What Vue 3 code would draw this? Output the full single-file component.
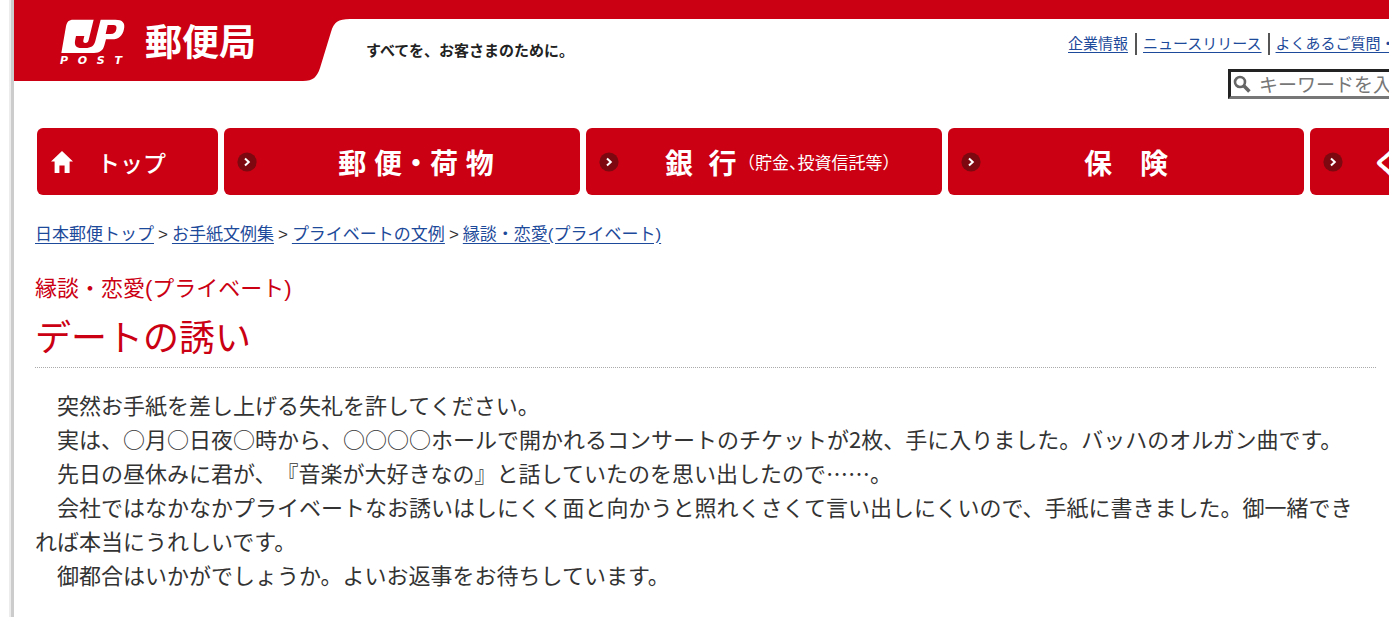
<script setup>
const utilityLinks = ['企業情報', 'ニュースリリース', 'よくあるご質問・お問い合わせ']

const services = [
  { name: '郵 便・荷 物', offset: true },
  { name: '銀  行', note: '（貯金、投資信託等）', offset: true },
  { name: '保　険' },
  { name: 'くらしの サービス' },
]

const crumbs = ['日本郵便トップ', 'お手紙文例集', 'プライベートの文例', '縁談・恋愛(プライベート)']

const letter = [
  '　突然お手紙を差し上げる失礼を許してください。',
  '　実は、○月○日夜○時から、○○○○ホールで開かれるコンサートのチケットが2枚、手に入りました。バッハのオルガン曲です。',
  '　先日の昼休みに君が、『音楽が大好きなの』と話していたのを思い出したので……。',
  '　会社ではなかなかプライベートなお誘いはしにくく面と向かうと照れくさくて言い出しにくいので、手紙に書きました。御一緒できれば本当にうれしいです。',
  '　御都合はいかがでしょうか。よいお返事をお待ちしています。',
]
</script>

<template>
  <div class="page">
    <header class="header">
      <div class="brand">
        <svg class="brand-tab" viewBox="0 0 336 81" aria-hidden="true">
          <path d="M0 0H336V19C324 19 320 22 317 32L306 68C303 77 299 81 289 81H0Z" fill="#cb0013" />
        </svg>
        <a class="brand-link" href="#">
          <span class="mark">
            <svg class="jp" viewBox="186 54 198 106" role="img" aria-label="JP">
              <path
                fill="#fff"
                fill-rule="evenodd"
                d="M226 58H352C374 58 382 68 378 86C374 107 362 117 342 117H324L320 132C316 150 306 158 288 158H190L204 78C207 64 212 58 226 58ZM329 74L323 101H338C348 101 353 97 355 87C357 78 354 74 346 74Z"
              />
              <path
                fill="#cb0013"
                d="M288 54H309L292 122C288 137 279 143 262 143H250C235 143 229 136 231 122L234 107H259L256 120C255 126 257 128 262 128C268 128 270 126 272 119Z"
              />
            </svg>
            <span class="post"><span>P</span><span>O</span><span>S</span><span>T</span></span>
          </span>
          <span class="brand-name">郵便局</span>
        </a>
      </div>
      <p class="slogan">すべてを、お客さまのために。</p>
      <div class="tools">
        <ul class="utility">
          <li v-for="link in utilityLinks" :key="link"><a href="#">{{ link }}</a></li>
        </ul>
        <label class="search">
          <svg viewBox="0 0 18 18" aria-hidden="true">
            <circle cx="7" cy="7" r="5" fill="none" stroke="#666" stroke-width="2.6" />
            <path d="M10.8 10.8L16.4 16.4" stroke="#666" stroke-width="3.6" />
          </svg>
          <input type="text" placeholder="キーワードを入力" aria-label="キーワードを入力" />
        </label>
      </div>
    </header>

    <nav class="services">
      <a class="service home" href="#">
        <svg class="house" viewBox="0 0 22 22" aria-hidden="true">
          <path d="M11 0L22 10.4H18.6V22H13.6V14.5H8.4V22H3.6V10.4H0Z" fill="#fff" />
        </svg>
        <span>トップ</span>
      </a>
      <a v-for="item in services" :key="item.name" class="service" href="#">
        <svg class="arrow" viewBox="0 0 20 20" aria-hidden="true">
          <circle cx="10" cy="10" r="9.6" fill="#7d0810" />
          <path d="M8 6.4L11.8 10L8 13.6" fill="none" stroke="#fff" stroke-width="2" />
        </svg>
        <span class="label" :class="{ offset: item.offset }">
          <span>{{ item.name }}</span>
          <small v-if="item.note">{{ item.note }}</small>
        </span>
      </a>
    </nav>

    <main class="content">
      <ol class="crumbs">
        <li v-for="crumb in crumbs" :key="crumb"><a href="#">{{ crumb }}</a></li>
      </ol>
      <p class="category">縁談・恋愛(プライベート)</p>
      <h1>デートの誘い</h1>
      <div class="letter">
        <p v-for="(line, i) in letter" :key="i">{{ line }}</p>
      </div>
    </main>
  </div>
</template>

<style>
body {
  margin: 0;
  background: #fff;
}
</style>

<style scoped>
.page {
  min-height: 100vh;
  box-sizing: border-box;
  margin-left: 11px;
  border-left: 3px solid #ccc;
  box-shadow: -2px 0 #ececec;
  overflow: hidden;
  color: #333;
  font-family: 'Liberation Sans', 'Noto Sans CJK JP', sans-serif;
}
p,
h1,
ul,
ol {
  margin: 0;
  padding: 0;
  font-weight: normal;
}
ul,
ol {
  display: flex;
  list-style: none;
  white-space: nowrap;
}
a {
  color: #1d4a9a;
  text-underline-offset: 3px;
}

.header {
  display: flex;
  align-items: flex-start;
  background: linear-gradient(#cb0013 19px, #fff 19px);
}
.brand {
  display: grid;
  flex: none;
}
.brand-tab,
.brand-link {
  grid-area: 1 / 1;
}
.brand-tab {
  width: 336px;
  height: 81px;
}
.brand-link {
  display: flex;
  gap: 19px;
  padding: 18px 0 0 46px;
  color: #fff;
  text-decoration: none;
}
.mark {
  display: flex;
  flex-direction: column;
  width: 66px;
}
.jp {
  width: 66px;
  height: 36px;
}
.post {
  display: flex;
  justify-content: space-between;
  width: 62px;
  font: italic bold 11px/14px 'DejaVu Sans', sans-serif;
}
.brand-name {
  font-size: 37px;
  font-weight: bold;
  line-height: 52px;
}
.slogan {
  padding: 40px 0 0 16px;
  color: #222;
  font-size: 15px;
  font-weight: bold;
  line-height: 22px;
  white-space: nowrap;
}
.tools {
  flex: none;
  width: 321px;
  margin-left: auto;
  padding-top: 33px;
  overflow: hidden;
}
.utility li {
  padding-right: 7px;
  font-size: 15px;
  line-height: 22px;
}
.utility li + li {
  padding: 0 6px;
  border-left: 2px solid #555;
}
.search {
  display: flex;
  align-items: center;
  box-sizing: border-box;
  width: 300px;
  height: 30px;
  margin: 14px 0 0 160px;
  padding-left: 2px;
  border: 3px solid;
  border-color: #222 #777 #777 #222;
}
.search svg {
  width: 18px;
  height: 18px;
}
.search input {
  flex: 1;
  min-width: 0;
  margin-left: 8px;
  padding: 0;
  border: 0;
  outline: 0;
  font: 19px/24px 'Noto Sans CJK JP', sans-serif;
}
.search input::placeholder {
  color: #777;
}

.services {
  display: flex;
  gap: 6px;
  margin: 29px 0 0 23px;
}
.service {
  display: grid;
  flex: none;
  align-items: center;
  box-sizing: border-box;
  width: 356px;
  height: 67px;
  border-radius: 6px;
  background: #cb0013;
  color: #fff;
  font-size: 28px;
  font-weight: bold;
  text-decoration: none;
  white-space: pre;
}
.service > * {
  grid-area: 1 / 1;
}
.home {
  display: flex;
  gap: 24px;
  width: 181px;
  padding-left: 14px;
  font-size: 23px;
  font-weight: 500;
}
.house {
  width: 22px;
  height: 22px;
}
.arrow {
  width: 20px;
  height: 20px;
  margin-left: 13px;
}
.label {
  display: flex;
  align-items: center;
  justify-content: center;
  gap: 10px;
}
.offset {
  padding-left: 28px;
}
.label small {
  font-size: 17px;
  font-weight: normal;
  font-feature-settings: 'halt';
}

.content {
  padding: 27px 13px 24px 21px;
}
.crumbs {
  font-size: 17px;
  line-height: 26px;
}
.crumbs li + li::before {
  content: '>';
  padding: 0 4px;
}
.category {
  margin-top: 25px;
  color: #cb0013;
  font-size: 22px;
  line-height: 32px;
}
h1 {
  padding: 10px 0 4px;
  border-bottom: 1px dotted #aaa;
  color: #cb0013;
  font-size: 36px;
  line-height: 48px;
}
.letter {
  margin-top: 19px;
  padding-right: 10px;
  font-family: 'Noto Sans CJK JP', sans-serif;
  font-size: 22px;
  line-height: 34px;
  text-spacing-trim: space-all;
}
</style>
